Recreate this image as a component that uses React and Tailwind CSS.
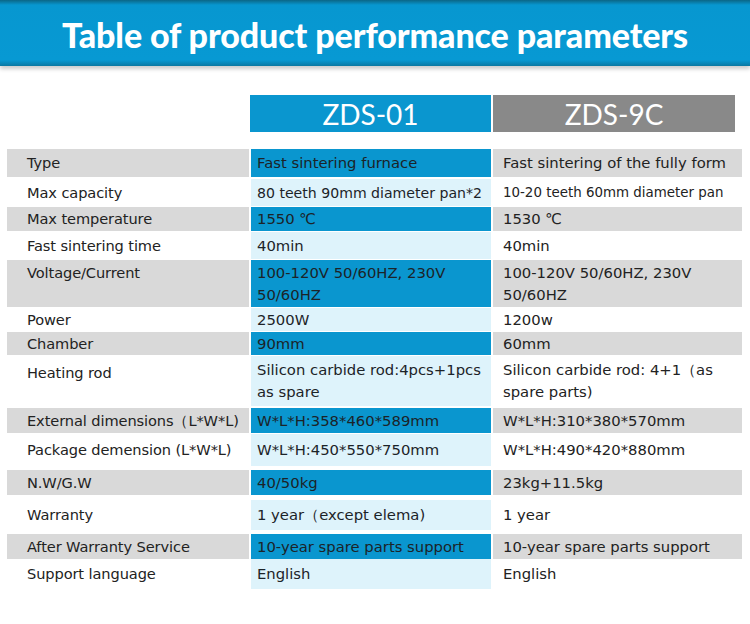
import React from 'react';

const rows = [
  { label: 'Type', a: 'Fast sintering furnace', b: 'Fast sintering of the fully form', hi: true, mt: 'mt-0', h: 'h-[28px]' },
  { label: 'Max capacity', a: '80 teeth 90mm diameter pan*2', b: '10-20 teeth 60mm diameter pan', mt: 'mt-[2px]', h: 'h-[27px]', small: true },
  { label: 'Max temperature', a: '1550 ℃', b: '1530 ℃', hi: true, mt: 'mt-[1px]', h: 'h-[24px]' },
  { label: 'Fast sintering time', a: '40min', b: '40min', mt: 'mt-[1px]', h: 'h-[27px]' },
  { label: 'Voltage/Current', a: '100-120V 50/60HZ, 230V 50/60HZ', b: '100-120V 50/60HZ, 230V 50/60HZ', hi: true, mt: 'mt-[1px]', h: 'h-[47px]', top: true },
  { label: 'Power', a: '2500W', b: '1200w', mt: 'mt-[1px]', h: 'h-[23px]' },
  { label: 'Chamber', a: '90mm', b: '60mm', hi: true, mt: 'mt-[1px]', h: 'h-[23px]' },
  { label: 'Heating rod', a: 'Silicon carbide rod:4pcs+1pcs as spare', b: 'Silicon carbide rod: 4+1（as spare parts)', mt: 'mt-[1px]', h: 'h-[50px]', labelTop: true },
  { label: 'External dimensions（L*W*L)', a: 'W*L*H:358*460*589mm', b: 'W*L*H:310*380*570mm', hi: true, mt: 'mt-[2px]', h: 'h-[25px]' },
  { label: 'Package demension (L*W*L)', a: 'W*L*H:450*550*750mm', b: 'W*L*H:490*420*880mm', mt: 'mt-[1px]', h: 'h-[32px]' },
  { label: 'N.W/G.W', a: '40/50kg', b: '23kg+11.5kg', hi: true, mt: 'mt-[4px]', h: 'h-[25px]' },
  { label: 'Warranty', a: '1 year（except elema)', b: '1 year', mt: 'mt-[5px]', h: 'h-[30px]' },
  { label: 'After Warranty Service', a: '10-year spare parts support', b: '10-year spare parts support', hi: true, mt: 'mt-[4px]', h: 'h-[25px]' },
  { label: 'Support language', a: 'English', b: 'English', mt: 'mt-0', h: 'h-[30px]' },
];

const ParamRow = ({ row }) => {
  const align = row.top ? 'items-start pt-[2px]' : 'items-center';
  const labelAlign = row.labelTop ? 'items-start pt-[6px]' : align;
  return (
    <div className={`flex gap-[2px] ${row.mt} ${row.h}`}>
      <div className={`w-[242px] flex ${labelAlign} pl-[20px] text-[14.6px] tracking-[-0.1px] leading-[22px] text-[#222] whitespace-nowrap ${row.hi ? 'bg-[#d9d9d9]' : 'bg-white'}`}>
        {row.label}
      </div>
      <div className={`w-[240px] flex ${align} px-[6px] ${row.small ? 'text-[14.1px]' : 'text-[14.8px]'} leading-[22px] text-[#1c2328] ${row.hi ? 'bg-[#0a96cf]' : 'bg-[#def3fb]'}`}>
        <span>{row.a}</span>
      </div>
      <div className={`w-[249px] flex ${align} px-[10px] ${row.small ? 'text-[13.4px]' : 'text-[14.8px]'} leading-[22px] text-[#222] ${row.hi ? 'bg-[#d9d9d9]' : 'bg-white'}`}>
        <span>{row.b}</span>
      </div>
    </div>
  );
};

export default function App() {
  return (
    <div className="w-[750px] h-[624px] bg-white overflow-hidden font-['DejaVu_Sans',sans-serif]">
      <div className="h-[66px] flex items-center justify-center bg-[linear-gradient(to_bottom,#0b6686_0px,#0797d0_5px,#0799d3_60px,#0a78a2_66px)] shadow-[0_3px_4px_rgba(0,0,0,0.2)]">
        <h1 className="text-white font-black text-[34px] tracking-[-0.1px] font-['Lato',sans-serif] pt-[2px]">
          Table of product performance parameters
        </h1>
      </div>

      <div className="flex gap-[2px] mt-[29px] pl-[250px] h-[37px]">
        <div className="w-[241px] bg-[#0a96cf] flex items-center justify-center text-white text-[28px] font-['Lato',sans-serif]">
          ZDS-01
        </div>
        <div className="w-[242px] bg-[#898989] flex items-center justify-center text-white text-[28px] font-['Lato',sans-serif]">
          ZDS-9C
        </div>
      </div>

      <div className="mt-[17px] pl-[7px]">
        {rows.map((row) => (
          <ParamRow key={row.label} row={row} />
        ))}
      </div>
    </div>
  );
}
